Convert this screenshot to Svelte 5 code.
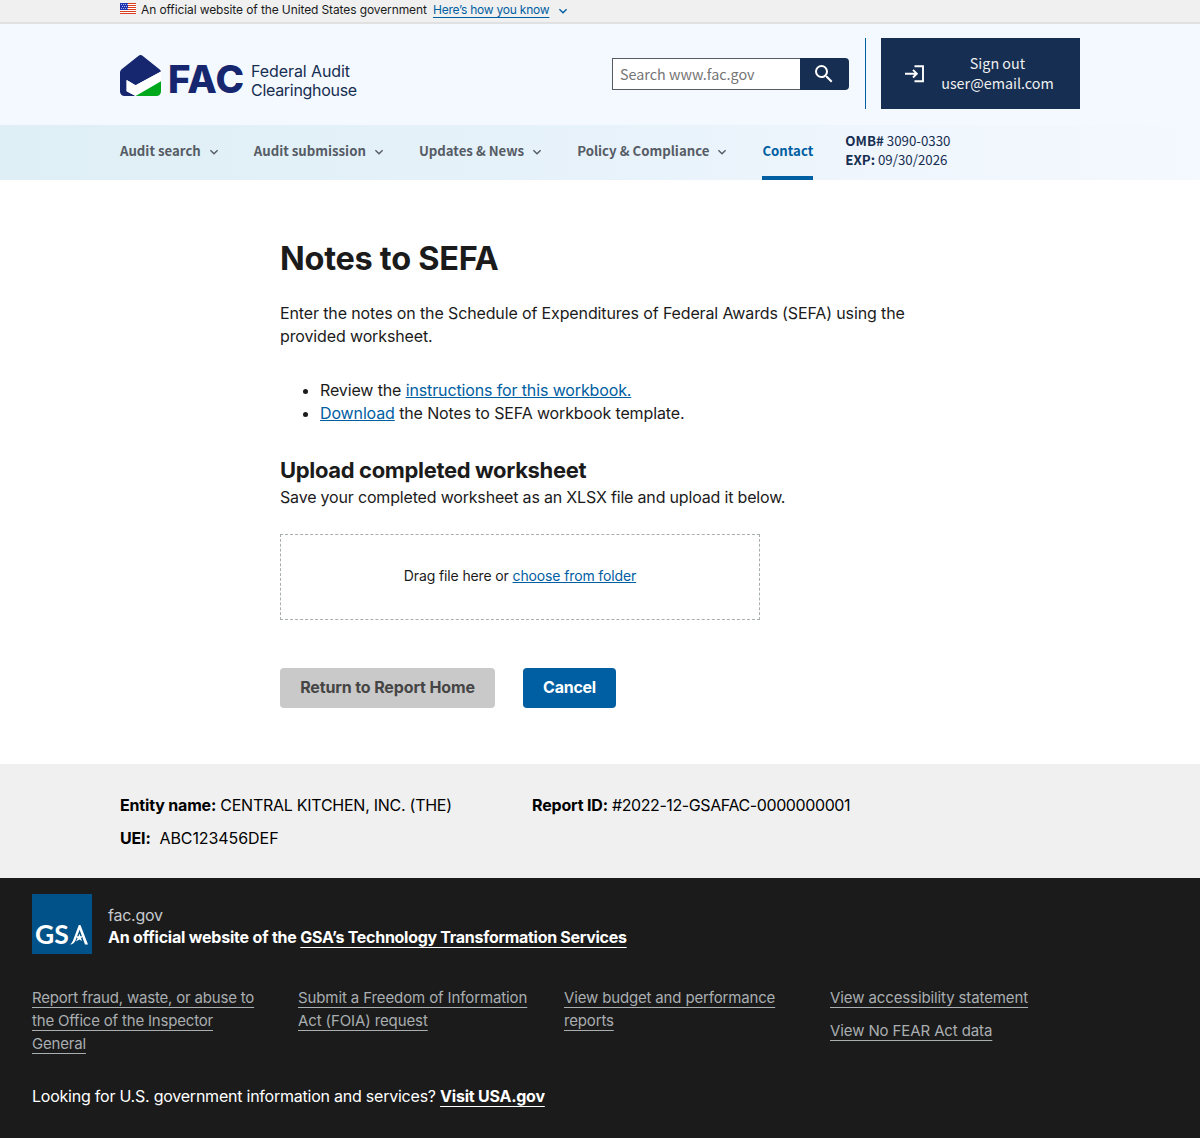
<script>
  const nav = ['Audit search', 'Audit submission', 'Updates & News', 'Policy & Compliance'];
  const footerColumns = [
    ['Report fraud, waste, or abuse to the Office of the Inspector General'],
    ['Submit a Freedom of Information Act (FOIA) request'],
    ['View budget and performance reports'],
    ['View accessibility statement', 'View No FEAR Act data'],
  ];
  const stripes = [0, 2, 4, 6, 8, 10];
</script>

{#snippet chevron()}
  <svg class="chevron" viewBox="0 0 10 10"><path d="M1.4 3.2 5 6.8l3.6-3.6" /></svg>
{/snippet}

<div class="banner">
  <svg class="flag" viewBox="0 0 16 11">
    <rect width="16" height="11" fill="#fff" />
    {#each stripes as y}<rect {y} width="16" height="1" fill="#db3e1f" />{/each}
    <rect width="8" height="7" fill="#1e33b1" />
    <path d="M1 1.5h7M2 3.5h6M1 5.5h7" stroke="#fff" stroke-width=".8" stroke-dasharray=".8 1.2" />
  </svg>
  <span class="banner-text">An official website of the United States government</span>
  <a class="banner-link" href="#how">Here’s how you know</a>
  {@render chevron()}
</div>

<header>
  <div class="logo">
    <svg class="mark" viewBox="0 0 41 41">
      <path fill="#162770" d="M18.3.9a3.6 3.6 0 0 1 4.5 0L39.4 14.2Q41 15.5 41 16.6L15.6 30.3 6.6 25v11.2l9 4.8H4.5A4.5 4.5 0 0 1 0 36.500V17.500Q0 15.500 1.600 14.200z" />
      <path fill="#fff" d="M6.600 25 15.600 30.300 41 16.600V26.200L15.600 41 6.600 36.200z" />
      <path fill="#00a91c" d="M41 26.200V36.500A4.500 4.500 0 0 1 36.500 41H15.600z" />
    </svg>
    <span class="fac">FAC</span>
    <span class="name">Federal Audit<br /><span class="house">Clearinghouse</span></span>
  </div>
  <div class="search">
    <span class="field">Search www.fac.gov</span>
    <span class="go">
      <svg viewBox="0 0 24 24"><path fill="#fff" d="M15.500 14h-.79l-.28-.27A6.470 6.470 0 0 0 16 9.500 6.500 6.500 0 1 0 9.500 16c1.610 0 3.090-.59 4.230-1.570l.27.28v.79l5 4.990L20.490 19l-4.990-5zm-6 0C7.010 14 5 11.990 5 9.500S7.010 5 9.500 5 14 7.010 14 9.500 11.990 14 9.500 14z" /></svg>
    </span>
  </div>
  <div class="divider"></div>
  <button class="signout">
    <svg viewBox="0 0 20 18"><path d="M0 8.700h12M8 4.900l3.800 3.800L8 12.500M9.500 1.200H18v15H9.500" /></svg>
    <span>Sign out<br />user@email.com</span>
  </button>
</header>

<nav>
  {#each nav as item}
    <span class="item">{item}{@render chevron()}</span>
  {/each}
  <span class="item current">Contact</span>
  <div class="omb"><b>OMB#</b> 3090-0330<br /><b>EXP:</b> 09/30/2026</div>
</nav>

<main>
  <h1>Notes to SEFA</h1>
  <p class="intro">Enter the notes on the Schedule of Expenditures of Federal Awards (SEFA) using the<br />provided worksheet.</p>
  <ul>
    <li>Review the <a href="#instructions">instructions for this workbook.</a></li>
    <li><a href="#download">Download</a> the Notes to SEFA workbook template.</li>
  </ul>
  <h2>Upload completed worksheet</h2>
  <p class="hint">Save your completed worksheet as an XLSX file and upload it below.</p>
  <div class="drop"><span>Drag file here or <a href="#choose">choose from folder</a></span></div>
  <div class="buttons">
    <button class="btn disabled">Return to Report Home</button>
    <button class="btn primary">Cancel</button>
  </div>
</main>

<section class="entity">
  <div class="left">
    <span class="entity-name"><b>Entity name:</b> CENTRAL KITCHEN, INC. (THE)</span>
    <span class="uei"><b>UEI:</b>&nbsp; ABC123456DEF</span>
  </div>
  <div class="report"><b>Report ID:</b> #2022-12-GSAFAC-0000000001</div>
</section>

<footer>
  <div class="identity">
    <div class="gsa"><span>GS</span><svg viewBox="0 0 18 20"><path fill="#fff" d="M8.800 0h1.700L18 19.500h-3L9.600 4.800 5.500 15.500Q3.500 19.500 0 19.500 2 18 3 15.500z" /><path fill="#fff" d="m9.400 8.400 1 2.800h3l-2.400 1.900 1 3-2.600-1.700-3.500 2.200 1.700-3.400-2-2h3z" /></svg></div>
    <div class="who">
      <span class="domain">fac.gov</span>
      <span class="official">An official website of the <a href="#tts">GSA’s Technology Transformation Services</a></span>
    </div>
  </div>
  <div class="links">
    {#each footerColumns as column}
      <div class="column">{#each column as link}<div><a href="#link">{link}</a></div>{/each}</div>
    {/each}
  </div>
  <p class="usa">Looking for U.S. government information and services? <a href="#usa">Visit USA.gov</a></p>
</footer>

<style>
  :global(body) {
    margin: 0;
    background: #fff;
    color: #1b1b1b;
    font-family: Inter, 'Liberation Sans', sans-serif;
    font-size: 16px;
    line-height: 23px;
  }
  p, h1, h2, ul { margin: 0; }
  a { color: #005ea2; text-decoration-thickness: 1px; text-underline-offset: 1px; text-decoration-skip-ink: none; }
  .chevron { width: 10px; height: 10px; fill: none; stroke: currentColor; stroke-width: 1.4; }

  .banner {
    display: flex;
    box-sizing: border-box;
    height: 24px;
    padding: 0 120px;
    background: #f0f0f0;
    border-bottom: 2px solid #dfe1e2;
    font-size: 12px;
    line-height: 20px;
    color: #1b1b1b;
  }
  .flag { width: 16px; height: 11px; margin: 3px 5px 0 0; }
  .banner-text { width: 292px; white-space: nowrap; letter-spacing: -0.11px; }
  .banner-link { width: 116px; text-underline-offset: 3px; margin-right: 9px; white-space: nowrap; letter-spacing: -0.23px; }
  .banner .chevron { margin-top: 6px; color: #005ea2; }

  header {
    display: flex;
    align-items: flex-start;
    box-sizing: border-box;
    height: 101px;
    padding: 0 120px;
    background: #f4f8ff;
  }
  .logo { display: flex; width: 492px; padding-top: 31px; }
  .mark { width: 41px; height: 41px; margin-right: 7px; }
  .fac { width: 83px; font-size: 38.500px; font-weight: 800; line-height: 49px; letter-spacing: 0.3px; color: #162770; }
  .name { font-size: 16px; line-height: 19px; padding-top: 7px; color: #162e51; letter-spacing: -0.08px; }
  .house { letter-spacing: -0.3px; }
  .search { display: flex; width: 237px; height: 32px; margin-top: 34px; }
  .field {
    box-sizing: border-box;
    width: 188px;
    padding-left: 7px;
    border: 1px solid #565c65;
    border-right: 0;
    background: #fff;
    font: 14.350px/29px 'Noto Sans CJK SC', sans-serif;
    color: #757575;
  }
  .go { display: flex; align-items: center; justify-content: center; width: 49px; background: #162e51; border-radius: 0 4px 4px 0; }
  .go svg { width: 24px; height: 24px; margin-right: 1px; }
  .divider { width: 1px; height: 71px; margin: 14px 15px 0 16px; background: #005ea2; }
  .signout {
    display: flex;
    align-items: center;
    box-sizing: border-box;
    width: 199px;
    height: 71px;
    margin: 14px 0 0;
    padding: 0 0 0 24px;
    border: 0;
    background: #162e51;
    color: #f0f0f0;
    font: 14.350px/20px 'Noto Sans CJK SC', sans-serif;
    text-align: center;
  }
  .signout svg { width: 20px; height: 18px; margin-right: 16px; fill: none; stroke: #fff; stroke-width: 1.9; }
  .signout span { width: 113px; padding-bottom: 1px; }

  nav {
    display: flex;
    box-sizing: border-box;
    height: 55px;
    padding-left: 120px;
    background: linear-gradient(90deg, #deeff5, #e7f2fa 50%, #f0f6fd 75%, #f4f8ff);
    font: 13.230px/51px 'Noto Sans CJK SC', sans-serif;
  }
  .item { margin-right: 35px; font-weight: 700; color: #565c65; white-space: nowrap; }
  .item .chevron { margin-left: 8px; vertical-align: -1px; }
  .current { box-sizing: border-box; margin-right: 32px; color: #005ea2; border-bottom: 4px solid #005ea2; }
  .omb { padding-top: 6px; line-height: 19px; font-size: 13.300px; color: #162e51; }

  main { box-sizing: border-box; height: 584px; padding: 60px 280px 0; letter-spacing: -0.13px; }
  h1 { font-size: 32.500px; line-height: 38px; letter-spacing: -0.28px; }
  .intro { margin-top: 24px; white-space: nowrap; }
  ul { margin-top: 31px; padding-left: 40px; }
  h2 { margin-top: 31px; font-size: 22px; line-height: 28px; letter-spacing: -0.35px; }
  .hint { margin-top: 2px; letter-spacing: -0.18px; }
  .drop {
    display: flex;
    align-items: center;
    justify-content: center;
    box-sizing: border-box;
    width: 480px;
    height: 86px;
    margin-top: 25px;
    padding-bottom: 3px;
    border: 1px dashed #a9aeb1;
    font-size: 14px;
  }
  .buttons { display: flex; gap: 28px; margin-top: 48px; }
  .btn { height: 40px; padding: 0 0 2px; border: 0; border-radius: 4px; font: 700 16px Inter, sans-serif; letter-spacing: -0.13px; }
  .disabled { width: 215px; background: #c9c9c9; color: #454545; }
  .primary { width: 93px; background: #005ea2; color: #fff; letter-spacing: -0.25px; }

  .entity { display: flex; box-sizing: border-box; height: 114px; padding: 30px 120px 0; background: #f0f0f0; color: #000; }
  .entity b { letter-spacing: -0.18px; }
  .left { display: flex; flex-direction: column; gap: 10px; width: 412px; }
  .entity-name { letter-spacing: -0.26px; }
  .uei { letter-spacing: -0.07px; }
  .report { letter-spacing: -0.4px; }

  footer { box-sizing: border-box; height: 260px; padding: 16px 32px 0; background: #1b1b1b; color: #fff; }
  .identity { display: flex; gap: 16px; }
  .gsa { display: flex; align-items: flex-end; box-sizing: border-box; width: 60px; height: 60px; padding: 0 3px 9px; background: #005288; }
  .gsa span { width: 35px; font: 700 26.500px/22px Lato, sans-serif; color: #fff; }
  .gsa svg { width: 18px; height: 20px; }
  .who { display: flex; flex-direction: column; padding-top: 10px; line-height: 22px; }
  .domain { color: #c6cace; letter-spacing: -0.25px; }
  .official { font-weight: 700; letter-spacing: -0.2px; }
  .official a { letter-spacing: -0.29px; }
  footer a { color: inherit; text-underline-offset: 4px; }
  .links { display: grid; grid-template-columns: repeat(4, 234px); gap: 32px; margin-top: 32px; color: #a9aeb1; font-size: 15px; letter-spacing: -0.11px; }
  .column { display: flex; flex-direction: column; gap: 10px; }
  .column:first-child { letter-spacing: -0.19px; }
  .column:nth-child(3) { letter-spacing: -0.16px; }
  .usa { margin-top: 30px; letter-spacing: -0.23px; }
  .usa a { font-weight: 700; }
</style>
